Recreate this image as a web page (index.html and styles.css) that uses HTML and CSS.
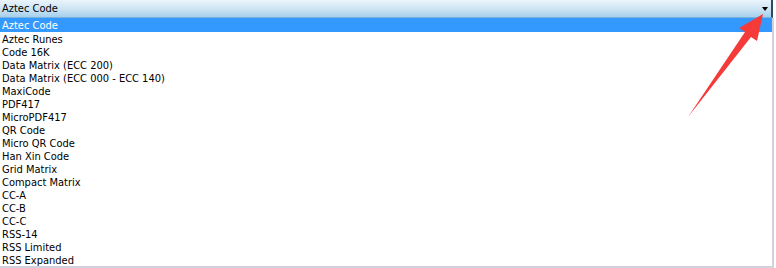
FILE: index.html
```html
<!DOCTYPE html>
<html lang="en">
<head>
  <meta charset="UTF-8">
  <title>Symbology</title>
  <link rel="stylesheet" href="styles.css">
</head>
<body>
  <div class="combo">
    <div class="combo-head">
      <span class="combo-value">Aztec Code</span>
      <span class="combo-btn"></span>
    </div>
    <ul class="combo-list">
      <li class="selected">Aztec Code</li>
      <li>Aztec Runes</li>
      <li>Code 16K</li>
      <li>Data Matrix (ECC 200)</li>
      <li>Data Matrix (ECC 000 - ECC 140)</li>
      <li>MaxiCode</li>
      <li>PDF417</li>
      <li>MicroPDF417</li>
      <li>QR Code</li>
      <li>Micro QR Code</li>
      <li>Han Xin Code</li>
      <li>Grid Matrix</li>
      <li>Compact Matrix</li>
      <li>CC-A</li>
      <li>CC-B</li>
      <li>CC-C</li>
      <li>RSS-14</li>
      <li>RSS Limited</li>
      <li>RSS Expanded</li>
    </ul>
  </div>

  <svg class="pointer" width="776" height="268" viewBox="0 0 776 268">
    <polygon points="763,14 757,41 751,37 688,117 745,32 739,28" fill="#f53a3a"/>
  </svg>
</body>
</html>
```

FILE: styles.css
```css
body {
  margin: 0;
  background: #ffffff;
  font-family: "DejaVu Sans Condensed", Tahoma, sans-serif;
  font-size: 11px;
  position: relative;
  width: 776px;
  height: 268px;
  overflow: hidden;
}

.combo {
  width: 774px;
}

.combo-head {
  height: 18px;
  display: flex;
  align-items: center;
  justify-content: space-between;
  background: linear-gradient(#eaf4fb, #cfe5f4 50%, #a6d0ec);
  border-right: 2px solid #2a4a66;
  border-bottom: 1px solid #7eb1d8;
  box-sizing: border-box;
  width: 773px;
}

.combo-value {
  padding-left: 2px;
  color: #000;
}

/* small black drop-down triangle */
.combo-btn {
  width: 0;
  height: 0;
  border-left: 3.5px solid transparent;
  border-right: 3.5px solid transparent;
  border-top: 4px solid #000;
  margin-right: 3px;
  margin-top: 1px;
}

.combo-list {
  list-style: none;
  margin: 0;
  padding: 0;
  border-right: 2px solid #d4d0dc;
  border-bottom: 2px solid #d4d0dc;
  width: 774px;
  box-sizing: border-box;
}

.combo-list li {
  height: 13px;
  line-height: 15px;
  padding-left: 2px;
  color: #000;
  white-space: nowrap;
}

.combo-list li.selected {
  background: #3399ff;
  color: #fff;
  height: 14px;
  line-height: 16px;
}

.pointer {
  position: absolute;
  left: 0;
  top: 0;
}
```
